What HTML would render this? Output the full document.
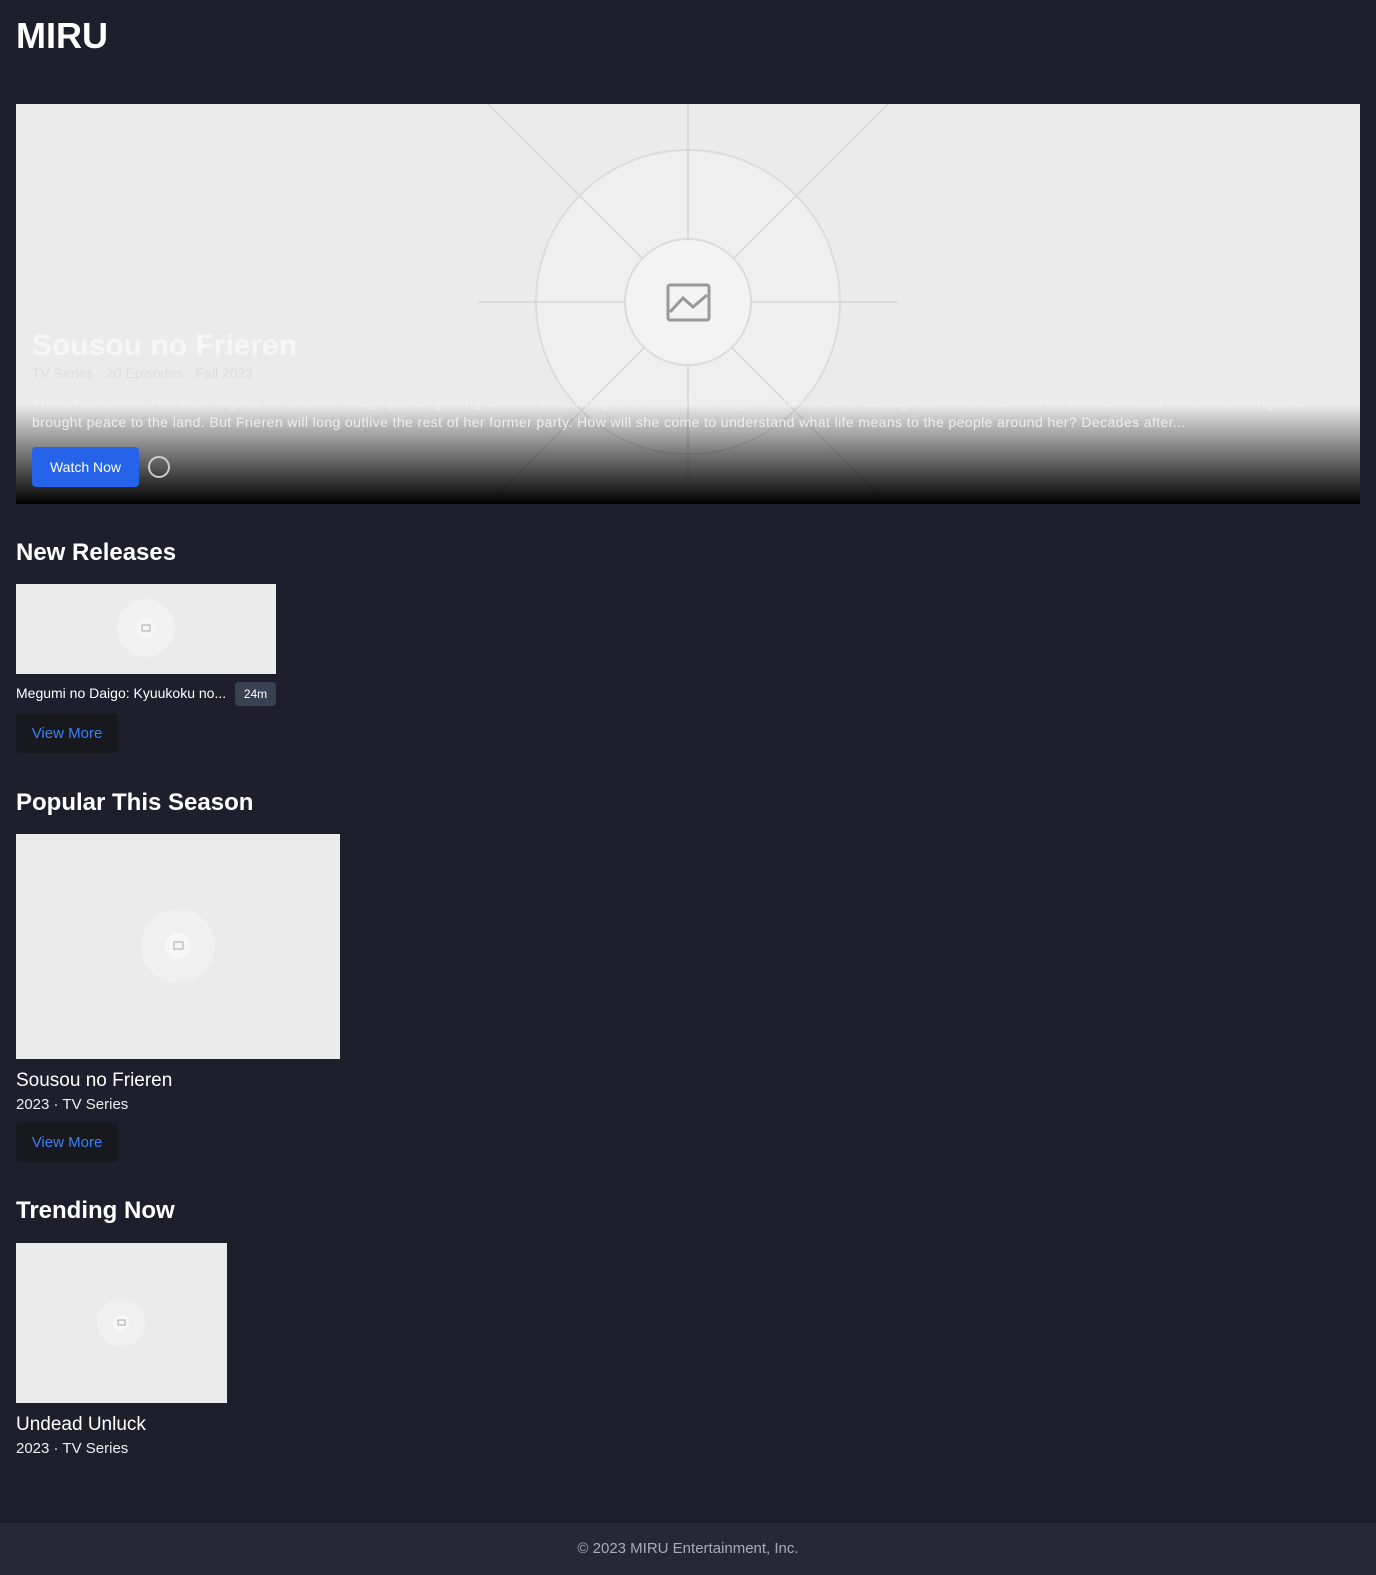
<!DOCTYPE html>
<html><head><meta charset="utf-8"><style>
*{margin:0;padding:0;box-sizing:border-box}
body{width:1376px;height:1575px;background:#1f1e2d;font-family:"Liberation Sans",sans-serif;color:#fff;position:relative;overflow:hidden}
h1{position:absolute;left:16px;top:15px;font-size:36px;font-weight:bold}
.hero{position:absolute;left:16px;top:104px;width:1344px;height:400px;background:#ebebeb;overflow:hidden}
.grad{position:absolute;left:0;right:0;top:300px;bottom:0;background:linear-gradient(rgba(0,0,0,0),rgba(0,0,0,.45) 45%,#000)}
.ht{position:absolute;left:16px;top:225px;font-size:30px;font-weight:bold;color:#f6f6f6}
.hm{position:absolute;left:16px;top:261px;font-size:14px;color:#ddd}
.hd{position:absolute;left:16px;top:288px;width:1320px;font-size:14px;line-height:20px;color:#eee;letter-spacing:0.4px;white-space:nowrap}
.btn{position:absolute;left:16px;top:343px;width:107px;height:40px;background:#2563eb;border-radius:4px;font-size:14px;line-height:40px;text-align:center}
.circ{position:absolute;left:132px;top:352px;width:22px;height:22px;border:2px solid #ccc;border-radius:50%}
h2{position:absolute;left:16px;font-size:24px;font-weight:bold}
.ph{position:absolute;background:#ebebeb;overflow:hidden}
.vm{position:absolute;left:16px;width:102px;height:39px;background:#18181f;border-radius:4px;color:#3b82f6;font-size:15px;line-height:39px;text-align:center}
.t{position:absolute;left:16px;font-size:19px}
.s{position:absolute;left:16px;font-size:15px;color:#eee}
footer{position:absolute;left:0;top:1523px;width:1376px;height:52px;background:#262836;color:#aab;font-size:15px;text-align:center;line-height:52px}
</style></head><body>
<h1>MIRU</h1>
<div class="hero">
<svg width="1344" height="400" style="position:absolute;left:0;top:0"><g stroke="#dcdcdc" stroke-width="2" fill="none"><circle cx="672" cy="198" r="152" fill="#efefef"/><line x1="672" y1="0" x2="672" y2="400"/><line x1="462" y1="198" x2="882" y2="198"/><line x1="472" y1="0" x2="872" y2="400"/><line x1="872" y1="0" x2="472" y2="400"/><circle cx="672" cy="198" r="63" fill="#f3f3f3"/></g><g stroke="#999" stroke-width="3" fill="none"><rect x="652" y="181" width="41" height="35" rx="2"/><polyline points="654,208 667,194 677,203 691,191"/></g></svg>
<div class="grad"></div>
<div class="ht">Sousou no Frieren</div>
<div class="hm">TV Series · 20 Episodes · Fall 2023</div>
<div class="hd">The adventure is over but life goes on for an elf mage just beginning to learn what living is all about. Elf mage Frieren and her courageous fellow adventurers have defeated the Demon King and<br>brought peace to the land. But Frieren will long outlive the rest of her former party. How will she come to understand what life means to the people around her? Decades after...</div>
<div class="btn">Watch Now</div><div class="circ"></div>
</div>
<h2 style="top:539px">New Releases</h2>
<div class="ph" style="left:16px;top:584px;width:260px;height:90px"><svg width="260" height="90"><circle cx="130" cy="44" r="29" fill="#f1f1f1"/><circle cx="130" cy="44" r="10" fill="#f6f6f6"/><rect x="126" y="41" width="8" height="6" fill="none" stroke="#aaa"/></svg></div>
<div style="position:absolute;left:16px;top:685px;font-size:14px">Megumi no Daigo: Kyuukoku no...</div>
<div style="position:absolute;left:235px;top:682px;width:41px;height:24px;background:#374151;border-radius:4px;font-size:12px;line-height:24px;text-align:center">24m</div>
<div class="vm" style="top:714px">View More</div>
<h2 style="top:789px">Popular This Season</h2>
<div class="ph" style="left:16px;top:834px;width:324px;height:225px"><svg width="324" height="225"><circle cx="162" cy="112" r="37" fill="#f0f0f0"/><circle cx="162" cy="112" r="13" fill="#f6f6f6"/><rect x="158" y="108" width="9" height="7" fill="none" stroke="#aaa"/></svg></div>
<div class="t" style="top:1070px">Sousou no Frieren</div>
<div class="s" style="top:1096px">2023 · TV Series</div>
<div class="vm" style="top:1123px">View More</div>
<h2 style="top:1197px">Trending Now</h2>
<div class="ph" style="left:16px;top:1243px;width:211px;height:160px"><svg width="211" height="160"><circle cx="105" cy="80" r="24" fill="#f0f0f0"/><circle cx="105" cy="80" r="8" fill="#f6f6f6"/><rect x="102" y="77" width="7" height="5" fill="none" stroke="#aaa"/></svg></div>
<div class="t" style="top:1414px">Undead Unluck</div>
<div class="s" style="top:1440px">2023 · TV Series</div>
<footer>© 2023 MIRU Entertainment, Inc.</footer>
</body></html>
